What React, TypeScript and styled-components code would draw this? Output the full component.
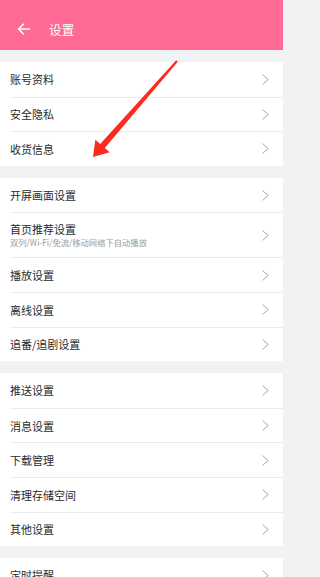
import React from "react";
import styled, { createGlobalStyle } from "styled-components";

const Global = createGlobalStyle`
  html, body { margin: 0; padding: 0; background: #f1f2f4; }
  body { font-family: "Noto Sans CJK SC", "Noto Sans", sans-serif; -webkit-font-smoothing: antialiased; }
  * { box-sizing: border-box; }
`;

const Page = styled.div`
  position: relative;
  width: 283px;
  height: 577px;
  overflow: hidden;
  background: #f1f2f4;
`;

const Header = styled.div`
  height: 50px;
  background: #fe6a94;
  display: flex;
  align-items: center;
  padding: 8px 0 0 17px;
  gap: 19px;
  color: #fff;
`;

const Title = styled.div`
  font-size: 12.5px;
  color: #fff;
  letter-spacing: 0.3px;
`;

const Group = styled.div`
  background: #fff;
  margin-top: 12px;
`;

const Row = styled.div<{ $tall?: boolean }>`
  margin-left: 10px;
  height: ${(p) => (p.$tall ? "45px" : "34.6px")};
  display: flex;
  align-items: center;
  justify-content: space-between;
  padding-right: 14px;
  & + & {
    border-top: 1px solid #ececec;
  }
`;

const Texts = styled.div`
  display: flex;
  flex-direction: column;
`;

const Label = styled.div`
  font-size: 11px;
  color: #2b2b2b;
  line-height: 14px;
`;

const Sub = styled.div`
  font-size: 8.3px;
  color: #9c9c9c;
  line-height: 11px;
  margin-top: 1px;
`;

const Arrow = styled.svg`
  position: absolute;
  left: 0;
  top: 0;
  pointer-events: none;
`;

const Chevron = () => (
  <svg width="7" height="11" viewBox="0 0 7 11">
    <polyline points="0.6,0.6 6.2,5.5 0.6,10.4" fill="none" stroke="#9a9a9a" strokeWidth="0.9" />
  </svg>
);

const BackIcon = () => (
  <svg width="13" height="12" viewBox="0 0 13 12">
    <path d="M12.5 6 H1.5 M6.3 1.2 L1.5 6 L6.3 10.8" fill="none" stroke="#fff" strokeWidth="1.6" strokeLinecap="round" strokeLinejoin="round" />
  </svg>
);

type Item = { label: string; sub?: string };

const groups: Item[][] = [
  [{ label: "账号资料" }, { label: "安全隐私" }, { label: "收货信息" }],
  [
    { label: "开屏画面设置" },
    { label: "首页推荐设置", sub: "双列/Wi-Fi/免流/移动网络下自动播放" },
    { label: "播放设置" },
    { label: "离线设置" },
    { label: "追番/追剧设置" },
  ],
  [
    { label: "推送设置" },
    { label: "消息设置" },
    { label: "下载管理" },
    { label: "清理存储空间" },
    { label: "其他设置" },
  ],
  [{ label: "定时提醒" }],
];

export default function App() {
  return (
    <Page>
      <Global />
      <Header>
        <BackIcon />
        <Title>设置</Title>
      </Header>
      {groups.map((g, gi) => (
        <Group key={gi}>
          {g.map((it) => (
            <Row key={it.label} $tall={!!it.sub}>
              <Texts>
                <Label>{it.label}</Label>
                {it.sub && <Sub>{it.sub}</Sub>}
              </Texts>
              <Chevron />
            </Row>
          ))}
        </Group>
      ))}
      <Arrow width="283" height="577" viewBox="0 0 283 577">
        <polygon
          points="176.2,60.3 177.8,61.7 104.8,148 109.7,152.2 93,157 95.3,139.8 100.2,144"
          fill="#fd2a1f"
        />
      </Arrow>
    </Page>
  );
}
